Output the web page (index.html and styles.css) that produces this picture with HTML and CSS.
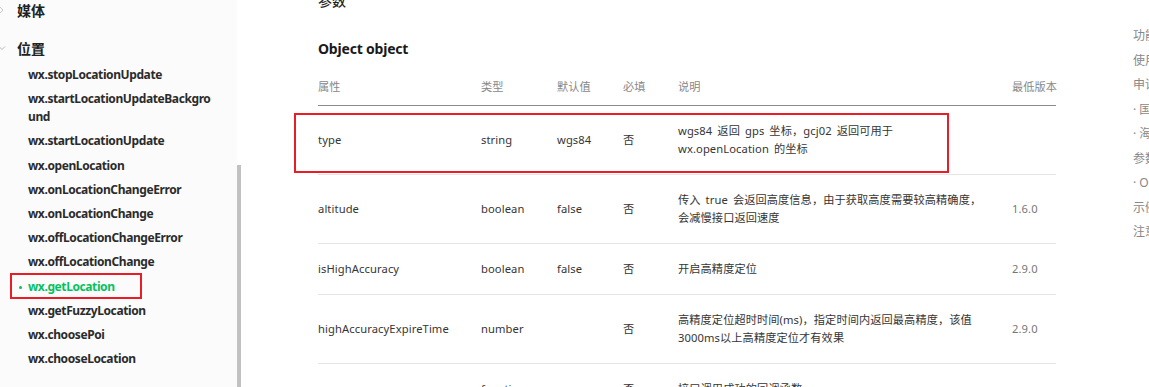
FILE: index.html
```html
<!DOCTYPE html>
<html lang="zh-CN">
<head>
<meta charset="utf-8">
<title>wx.getLocation</title>
<link rel="stylesheet" href="styles.css">
</head>
<body>
<div class="page">
  <div class="side-wrap">
    <nav class="sidebar">
      <div class="group">
        <svg class="chev" width="8" height="8" viewBox="0 0 8 8"><path d="M2 1 L5 4 L2 7" fill="none" stroke="#c8c8c8" stroke-width="1"/></svg>
        <span>媒体</span>
      </div>
      <div class="group open">
        <svg class="chev" width="8" height="8" viewBox="0 0 8 8"><path d="M1 2.5 L4 5.5 L7 2.5" fill="none" stroke="#b8b8b8" stroke-width="1"/></svg>
        <span>位置</span>
      </div>
      <ul class="items">
        <li>wx.stopLocationUpdate</li>
        <li>wx.startLocationUpdateBackground</li>
        <li>wx.startLocationUpdate</li>
        <li>wx.openLocation</li>
        <li>wx.onLocationChangeError</li>
        <li>wx.onLocationChange</li>
        <li>wx.offLocationChangeError</li>
        <li>wx.offLocationChange</li>
        <li class="active">wx.getLocation</li>
        <li>wx.getFuzzyLocation</li>
        <li>wx.choosePoi</li>
        <li>wx.chooseLocation</li>
      </ul>
    </nav>
    <div class="track"><div class="thumb"></div></div>
  </div>

  <main class="content">
    <h2 class="h2">参数</h2>
    <h3 class="h3">Object object</h3>
    <table class="params">
      <colgroup>
        <col class="c1"><col class="c2"><col class="c3"><col class="c4"><col class="c5"><col class="c6">
      </colgroup>
      <thead>
        <tr><th>属性</th><th>类型</th><th>默认值</th><th>必填</th><th>说明</th><th>最低版本</th></tr>
      </thead>
      <tbody>
        <tr><td>type</td><td>string</td><td>wgs84</td><td>否</td><td>wgs84 返回 gps 坐标，gcj02 返回可用于 wx.openLocation 的坐标</td><td class="ver"></td></tr>
        <tr><td>altitude</td><td>boolean</td><td>false</td><td>否</td><td>传入 true 会返回高度信息，由于获取高度需要较高精确度，会减慢接口返回速度</td><td class="ver">1.6.0</td></tr>
        <tr><td>isHighAccuracy</td><td>boolean</td><td>false</td><td>否</td><td>开启高精度定位</td><td class="ver">2.9.0</td></tr>
        <tr><td>highAccuracyExpireTime</td><td>number</td><td></td><td>否</td><td>高精度定位超时时间(ms)，指定时间内返回最高精度，该值3000ms以上高精度定位才有效果</td><td class="ver">2.9.0</td></tr>
        <tr><td>success</td><td>function</td><td></td><td>否</td><td>接口调用成功的回调函数</td><td class="ver"></td></tr>
      </tbody>
    </table>
  </main>

  <aside class="toc">
    <div class="toc-item">功能描述</div>
    <div class="toc-item">使用方法</div>
    <div class="toc-item">申请开通</div>
    <div class="toc-item">· 国内主体开通步骤</div>
    <div class="toc-item">· 海外主体开通步骤</div>
    <div class="toc-item">参数</div>
    <div class="toc-item">· Object object</div>
    <div class="toc-item">示例代码</div>
    <div class="toc-item">注意事项</div>
  </aside>
</div>
<div class="mark mark-row"></div>
<div class="mark mark-nav"></div>
</body>
</html>
```

FILE: styles.css
```css
* { box-sizing: border-box; }
html, body {
  margin: 0;
  padding: 0;
  width: 1149px;
  height: 387px;
  overflow: hidden;
  background: #fff;
}
body {
  position: relative;
  font-family: "Noto Sans", "Noto Sans CJK SC", sans-serif;
  font-size: 12px;
  color: #353535;
}
.page {
  display: flex;
  width: 1149px;
  height: 387px;
  overflow: hidden;
}
.side-wrap {
  display: flex;
  flex: none;
}
.sidebar {
  width: 237px;
  height: 387px;
  background: #fbfbfb;
  padding: 0 24px 0 0;
}
.group {
  display: flex;
  align-items: center;
  height: 20px;
  font-size: 14px;
  font-weight: 700;
  color: #222;
  margin-left: -2px;
}
.group.open { margin-top: 18px; }
.group .chev { margin-right: 11px; flex: none; }
.items {
  list-style: none;
  margin: 5px 0 0;
  padding: 0 0 0 28px;
}
.items li {
  font-weight: 700;
  font-size: 12px;
  line-height: 18px;
  letter-spacing: -0.4px;
  padding: 3.1px 0;
  color: #2b2b2b;
  word-break: break-all;
  position: relative;
}
.items li.active { color: #07c160; }
.items li.active::before {
  content: "";
  position: absolute;
  left: -9px;
  top: 11px;
  width: 3px;
  height: 3px;
  border-radius: 50%;
  background: #07c160;
}
.track {
  width: 4px;
  height: 387px;
}
.thumb {
  margin-top: 165px;
  height: 222px;
  background: #c1c1c1;
}
.content {
  flex: none;
  width: 815px;
  padding-left: 77px;
}
.h2 {
  margin: -9px 0 0;
  font-size: 14px;
  line-height: 20px;
  font-weight: 500;
  color: #222;
}
.h3 {
  margin: 28px 0 0;
  font-size: 14px;
  line-height: 20px;
  font-weight: 700;
  letter-spacing: -0.2px;
  color: #1a1a1a;
}
.params {
  margin-top: 9px;
  width: 738px;
  border-collapse: collapse;
  table-layout: fixed;
  font-size: 11.2px;
  letter-spacing: 0.1px;
  word-spacing: 2px;
}
.c1 { width: 163px; }
.c2 { width: 76px; }
.c3 { width: 66px; }
.c4 { width: 55px; }
.c5 { width: 334px; }
.c6 { width: 44px; }
.params th {
  text-align: left;
  font-weight: 400;
  color: #888;
  line-height: 18px;
  white-space: nowrap;
  padding: 10px 0 9px;
  border-bottom: 1px solid #8c8c8c;
}
.params td {
  line-height: 18px;
  padding: 16px 0;
  border-bottom: 1px solid #e5e5e5;
  vertical-align: middle;
}
.params td:nth-child(5) { padding-right: 29px; }
.params td.ver { color: #777; }
.toc {
  flex: none;
  width: 200px;
  margin-left: 77px;
  padding-top: 24px;
  white-space: nowrap;
}
.toc-item {
  line-height: 24.5px;
  color: #888;
  font-size: 12px;
}
.mark {
  position: absolute;
  border: 2px solid #e81d25;
}
.mark-row {
  left: 294px;
  top: 113px;
  width: 655px;
  height: 60px;
}
.mark-nav {
  left: 10px;
  top: 273px;
  width: 132px;
  height: 26px;
}
```
